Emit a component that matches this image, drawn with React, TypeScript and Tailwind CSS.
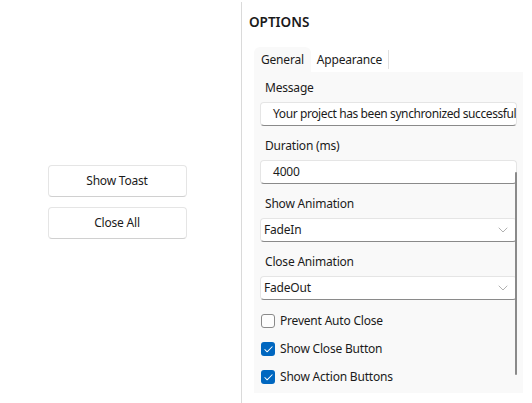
import { ChevronDown, Check } from "lucide-react";

const font = "font-['Segoe_UI','Noto_Sans',sans-serif]";
const txt = "text-[12px] tracking-[-0.2px] text-[#1b1b1b]";

function Field({ label, children }: { label: string; children: React.ReactNode }) {
  return (
    <div className="mt-[11px] first:mt-0">
      <div className={`h-[18px] pl-[5px] leading-[18px] ${txt}`}>{label}</div>
      <div className="mt-[5px]">{children}</div>
    </div>
  );
}

function TextBox({ value, tight }: { value: string; tight?: boolean }) {
  return (
    <div className="flex h-[24px] items-center overflow-hidden whitespace-nowrap rounded-[4px] border border-[#e5e5e5] border-b-[#8a8a8a] bg-white pl-[12px] text-[12px] text-[#1b1b1b]">
      <span className={tight ? "tracking-[-0.4px]" : "tracking-[-0.2px]"}>{value}</span>
    </div>
  );
}

function Select({ value }: { value: string }) {
  return (
    <div className={`flex h-[24px] items-center justify-between rounded-[4px] border border-[#e5e5e5] border-b-[#8a8a8a] bg-white pl-[3px] pr-[5px] ${txt}`}>
      <span>{value}</span>
      <ChevronDown size={16} strokeWidth={1} className="text-[#8a8a8a]" />
    </div>
  );
}

function CheckRow({ label, checked }: { label: string; checked?: boolean }) {
  return (
    <div className="flex h-[28px] items-center gap-[5px] pl-[1px]">
      {checked ? (
        <span className="flex h-[14px] w-[14px] items-center justify-center rounded-[3px] bg-[#0067c0]">
          <Check size={11} strokeWidth={2.2} className="text-white" />
        </span>
      ) : (
        <span className="h-[14px] w-[14px] rounded-[3px] border border-[#8a8a8a] bg-[#fdfdfd]" />
      )}
      <span className={txt}>{label}</span>
    </div>
  );
}

function ActionButton({ label }: { label: string }) {
  return (
    <button className={`h-[32px] w-[139px] rounded-[4px] border border-[#e5e5e5] border-b-[#d0d0d0] bg-white ${txt}`}>
      {label}
    </button>
  );
}

export default function App() {
  return (
    <div className={`flex h-[403px] w-[532px] bg-white ${font}`}>
      {/* left side */}
      <div className="flex w-[233px] flex-col items-center justify-center gap-[10px] pl-[1px]">
        <ActionButton label="Show Toast" />
        <ActionButton label="Close All" />
      </div>
      <div className="ml-[8px] mt-[2px] w-px bg-[#dadada]" />

      {/* options */}
      <div className="flex-1">
        <div className="h-[47px] pl-[7px] pt-[13px] text-[13.5px] font-semibold leading-[18px] text-[#1b1b1b]">
          OPTIONS
        </div>
        <div className="ml-[12px] w-[269px]">
          <div className="flex h-[25px] items-stretch">
            <div className={`flex items-center rounded-t-[6px] bg-[#f9f9f9] px-[7px] ${txt}`}>General</div>
            <div className={`flex items-center px-[6px] ${txt}`}>Appearance</div>
            <div className="my-[3px] w-px bg-[#e0e0e0]" />
          </div>
          <div className="relative h-[321px] bg-[#f9f9f9] px-[6px] pt-[7px]">
            <Field label="Message">
              <TextBox value="Your project has been synchronized successfully!" tight />
            </Field>
            <Field label="Duration (ms)">
              <TextBox value="4000" />
            </Field>
            <Field label="Show Animation">
              <Select value="FadeIn" />
            </Field>
            <Field label="Close Animation">
              <Select value="FadeOut" />
            </Field>
            <div className="mt-[7px]">
              <CheckRow label="Prevent Auto Close" />
              <CheckRow label="Show Close Button" checked />
              <CheckRow label="Show Action Buttons" checked />
            </div>
            {/* scrollbar */}
            <div className="absolute right-[6px] top-[100px] h-[203px] w-[2px] rounded-full bg-[#8a8a8a]" />
          </div>
        </div>
      </div>
    </div>
  );
}
